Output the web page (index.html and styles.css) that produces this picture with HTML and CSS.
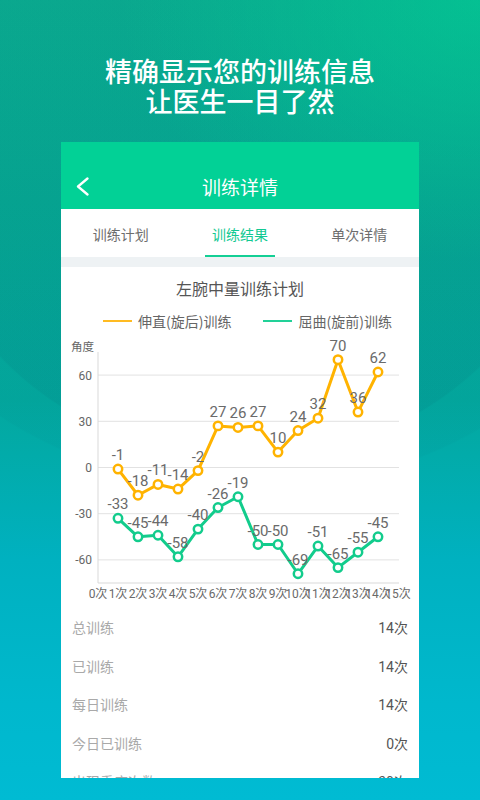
FILE: index.html
```html
<!DOCTYPE html>
<html lang="zh-CN">
<head>
<meta charset="utf-8">
<title>训练详情</title>
<link rel="stylesheet" href="styles.css">
</head>
<body>
<div class="page">
  <h1 class="headline">精确显示您的训练信息<br>让医生一目了然</h1>
  <div class="card">
    <div class="appbar">
      <svg class="back" width="13" height="19" viewBox="0 0 13 19"><polyline points="11.5,1.5 2,9.5 11.5,17.5"/></svg>
      <div class="appbar-title">训练详情</div>
      <span></span>
    </div>
    <div class="tabs">
      <div class="tab">训练计划</div>
      <div class="tab active">训练结果</div>
      <div class="tab">单次详情</div>
    </div>
    <div class="divider"></div>
    <div class="chart-title">左腕中量训练计划</div>
    <div class="legend">
      <div class="legend-item"><span class="legend-line yellow"></span>伸直(旋后)训练</div>
      <div class="legend-item"><span class="legend-line green"></span>屈曲(旋前)训练</div>
    </div>
    <svg class="chart" width="358" height="270" viewBox="0 0 358 270">
      <g class="grid">
        <line x1="37" y1="37.1" x2="338" y2="37.1"/>
        <line x1="37" y1="83.3" x2="338" y2="83.3"/>
        <line x1="37" y1="129.5" x2="338" y2="129.5"/>
        <line x1="37" y1="175.7" x2="338" y2="175.7"/>
        <line x1="37" y1="221.9" x2="338" y2="221.9"/>
      </g>
      <g class="axis">
        <line x1="37" y1="14" x2="37" y2="245"/>
        <line x1="37" y1="245" x2="338" y2="245"/>
      </g>
      <g class="ylabels">
        <text class="cjk" x="33" y="13">角度</text>
        <text x="31" y="41.6">60</text>
        <text x="31" y="87.8">30</text>
        <text x="31" y="134">0</text>
        <text x="31" y="180.2">-30</text>
        <text x="31" y="226.4">-60</text>
      </g>
      <g class="xlabels">
        <text x="37" y="260">0次</text>
        <text x="57" y="260">1次</text>
        <text x="77" y="260">2次</text>
        <text x="97" y="260">3次</text>
        <text x="117" y="260">4次</text>
        <text x="137" y="260">5次</text>
        <text x="157" y="260">6次</text>
        <text x="177" y="260">7次</text>
        <text x="197" y="260">8次</text>
        <text x="217" y="260">9次</text>
        <text x="237" y="260">10次</text>
        <text x="257" y="260">11次</text>
        <text x="277" y="260">12次</text>
        <text x="297" y="260">13次</text>
        <text x="317" y="260">14次</text>
        <text x="337" y="260">15次</text>
      </g>
      <polyline class="series yellow" points="57,131.04 77,157.22 97,146.44 117,151.06 137,132.58 157,87.92 177,89.46 197,87.92 217,114.1 237,92.54 257,80.22 277,21.7 297,74.06 317,34.02"/>
      <polyline class="series green" points="57,180.32 77,198.8 97,197.26 117,218.82 137,191.1 157,169.54 177,158.76 197,206.5 217,206.5 237,235.76 257,208.04 277,229.6 297,214.2 317,198.8"/>
      <g class="dots yellow">
        <circle cx="57" cy="131.04" r="4.2"/><circle cx="77" cy="157.22" r="4.2"/><circle cx="97" cy="146.44" r="4.2"/><circle cx="117" cy="151.06" r="4.2"/><circle cx="137" cy="132.58" r="4.2"/><circle cx="157" cy="87.92" r="4.2"/><circle cx="177" cy="89.46" r="4.2"/><circle cx="197" cy="87.92" r="4.2"/><circle cx="217" cy="114.1" r="4.2"/><circle cx="237" cy="92.54" r="4.2"/><circle cx="257" cy="80.22" r="4.2"/><circle cx="277" cy="21.7" r="4.2"/><circle cx="297" cy="74.06" r="4.2"/><circle cx="317" cy="34.02" r="4.2"/>
      </g>
      <g class="dots green">
        <circle cx="57" cy="180.32" r="4.2"/><circle cx="77" cy="198.8" r="4.2"/><circle cx="97" cy="197.26" r="4.2"/><circle cx="117" cy="218.82" r="4.2"/><circle cx="137" cy="191.1" r="4.2"/><circle cx="157" cy="169.54" r="4.2"/><circle cx="177" cy="158.76" r="4.2"/><circle cx="197" cy="206.5" r="4.2"/><circle cx="217" cy="206.5" r="4.2"/><circle cx="237" cy="235.76" r="4.2"/><circle cx="257" cy="208.04" r="4.2"/><circle cx="277" cy="229.6" r="4.2"/><circle cx="297" cy="214.2" r="4.2"/><circle cx="317" cy="198.8" r="4.2"/>
      </g>
      <g class="vlabels">
        <text x="57" y="122.04">-1</text>
        <text x="77" y="148.22">-18</text>
        <text x="97" y="137.44">-11</text>
        <text x="117" y="142.06">-14</text>
        <text x="137" y="123.58">-2</text>
        <text x="157" y="78.92">27</text>
        <text x="177" y="80.46">26</text>
        <text x="197" y="78.92">27</text>
        <text x="217" y="105.1">10</text>
        <text x="237" y="83.54">24</text>
        <text x="257" y="71.22">32</text>
        <text x="277" y="12.7">70</text>
        <text x="297" y="65.06">36</text>
        <text x="317" y="25.02">62</text>
        <text x="57" y="171.32">-33</text>
        <text x="77" y="189.8">-45</text>
        <text x="97" y="188.26">-44</text>
        <text x="117" y="209.82">-58</text>
        <text x="137" y="182.1">-40</text>
        <text x="157" y="160.54">-26</text>
        <text x="177" y="149.76">-19</text>
        <text x="197" y="197.5">-50</text>
        <text x="217" y="197.5">-50</text>
        <text x="237" y="226.76">-69</text>
        <text x="257" y="199.04">-51</text>
        <text x="277" y="220.6">-65</text>
        <text x="297" y="205.2">-55</text>
        <text x="317" y="189.8">-45</text>
      </g>
    </svg>
    <div class="stats">
      <div class="row"><span class="label">总训练</span><span class="value">14次</span></div>
      <div class="row"><span class="label">已训练</span><span class="value">14次</span></div>
      <div class="row"><span class="label">每日训练</span><span class="value">14次</span></div>
      <div class="row"><span class="label">今日已训练</span><span class="value">0次</span></div>
      <div class="row"><span class="label">出现重度次数</span><span class="value">30次</span></div>
    </div>
  </div>
</div>
</body>
</html>
```
FILE: styles.css
```css
html, body {
  margin: 0;
  padding: 0;
}

body {
  width: 480px;
  height: 800px;
  overflow: hidden;
  font-family: Roboto, "Noto Sans CJK SC", sans-serif;
  background:
    radial-gradient(ellipse 360px 260px at 480px 0px, rgba(0, 212, 150, 0.55), rgba(0, 212, 150, 0) 100%),
    radial-gradient(ellipse 330px 310px at 245px 150px, rgba(0, 70, 90, 0.07) 99.5%, rgba(0, 70, 90, 0) 100%),
    radial-gradient(ellipse 420px 370px at 250px 120px, rgba(0, 70, 90, 0.035) 99.5%, rgba(0, 70, 90, 0) 100%),
    linear-gradient(180deg, #0bb394 0%, #06ad96 25%, #03a89e 50%, #00b1c0 70%, #00b8cd 88%, #00bbd3 100%);
}

.page {
  padding-top: 56px;
}

.headline {
  margin: 0;
  text-align: center;
  color: #ffffff;
  font-family: "Noto Sans CJK SC", sans-serif;
  font-size: 27px;
  line-height: 30px;
  font-weight: 500;
}

.card {
  width: 358px;
  height: 636px;
  margin: 26px auto 0;
  background: #ffffff;
  overflow: hidden;
  font-family: Roboto, "Noto Sans CJK SC", sans-serif;
}

.appbar {
  height: 45px;
  padding-top: 22px;
  background: #02d196;
  display: grid;
  grid-template-columns: 1fr auto 1fr;
  align-items: center;
}

.back {
  margin-left: 15px;
  display: block;
}

.back polyline {
  fill: none;
  stroke: #ffffff;
  stroke-width: 2.3;
  stroke-linecap: round;
  stroke-linejoin: round;
}

.appbar-title {
  color: #ffffff;
  font-size: 19px;
  font-family: "Noto Sans CJK SC", sans-serif;
  line-height: 24px;
}

.tabs {
  display: grid;
  grid-template-columns: 1fr 1fr 1fr;
  height: 48px;
}

.tab {
  position: relative;
  display: flex;
  align-items: center;
  justify-content: center;
  padding-top: 2px;
  font-size: 14px;
  color: #6d6d6d;
  font-family: "Noto Sans CJK SC", sans-serif;
}

.tab.active {
  color: #12c992;
}

.tab.active::after {
  content: "";
  position: absolute;
  left: 50%;
  bottom: 0;
  width: 70px;
  height: 2px;
  margin-left: -35px;
  background: #14cf95;
}

.divider {
  height: 10px;
  background: #eef2f4;
}

.chart-title {
  margin-top: 10px;
  height: 22px;
  line-height: 22px;
  text-align: center;
  font-size: 16px;
  color: #555555;
  font-family: "Noto Sans CJK SC", sans-serif;
}

.legend {
  margin-top: 11px;
  height: 22px;
  display: flex;
  align-items: center;
  gap: 32px;
  padding-left: 42px;
}

.legend-item {
  display: flex;
  align-items: center;
  font-size: 14px;
  color: #666666;
  font-family: "Noto Sans CJK SC", sans-serif;
}

.legend-line {
  display: block;
  width: 29px;
  height: 1.5px;
  margin-right: 6px;
}

.legend-line.yellow {
  background: #ffbb22;
}

.legend-line.green {
  background: #22d198;
}

.chart {
  display: block;
  margin-top: 6px;
}

.grid line {
  stroke: #e2e2e2;
  stroke-width: 1;
}

.axis line {
  stroke: #d9d9d9;
  stroke-width: 1;
}

.ylabels text {
  font-family: Roboto, sans-serif;
  font-size: 12px;
  fill: #666666;
  text-anchor: end;
}

.ylabels text.cjk {
  font-family: "Noto Sans CJK SC", sans-serif;
  font-size: 11.5px;
}

.xlabels text {
  font-family: Roboto, "Noto Sans CJK SC", sans-serif;
  font-size: 12px;
  fill: #6a6a6a;
  text-anchor: middle;
}

.series {
  fill: none;
  stroke-width: 3;
  stroke-linejoin: round;
}

.series.yellow {
  stroke: #ffb300;
}

.series.green {
  stroke: #12cc8c;
}

.dots circle {
  fill: #ffffff;
  stroke-width: 2.5;
}

.dots.yellow circle {
  stroke: #ffb300;
}

.dots.green circle {
  stroke: #12cc8c;
}

.vlabels text {
  font-family: Roboto, sans-serif;
  font-size: 15px;
  fill: #6a6a6a;
  text-anchor: middle;
}

.stats {
  padding: 0 11px;
}

.row {
  height: 38.5px;
  display: flex;
  align-items: center;
  justify-content: space-between;
  font-size: 14px;
}

.label {
  color: #a9a9a9;
  font-family: "Noto Sans CJK SC", sans-serif;
}

.value {
  color: #555555;
}
```
